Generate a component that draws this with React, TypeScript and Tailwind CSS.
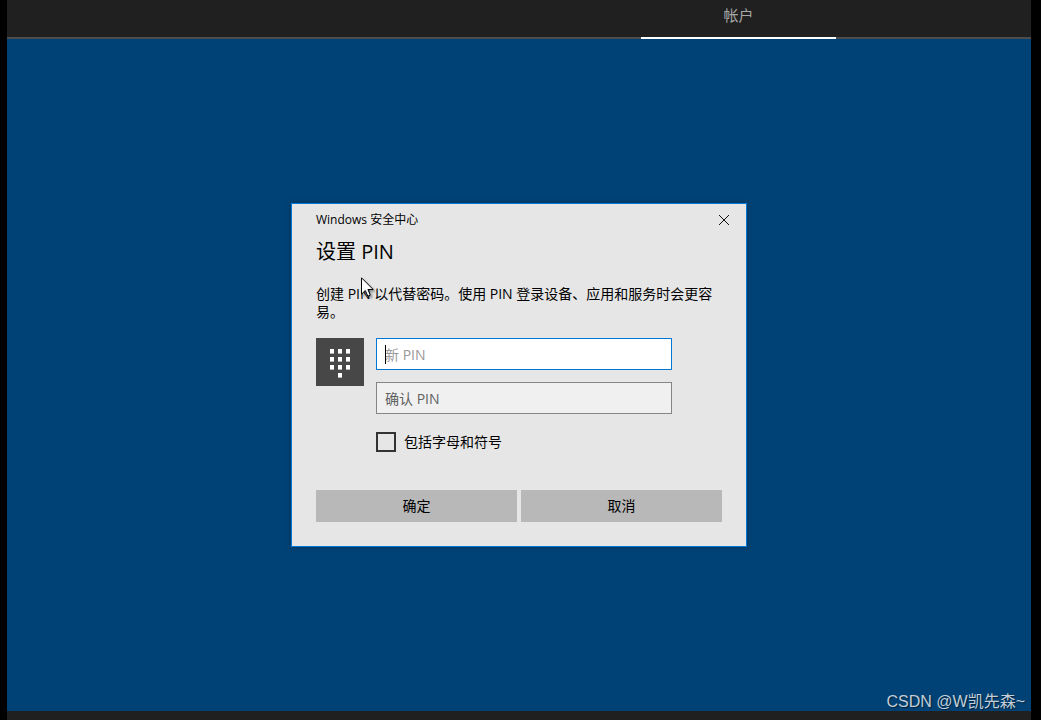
const fieldBase =
  "block h-8 w-full rounded-none border px-2 text-sm text-black outline-none"

// Dial pad: three full rows and a single key below
const keys = [
  [0, 2], [8, 2], [16, 2],
  [0, 10], [8, 10], [16, 10],
  [0, 18], [8, 18], [16, 18],
  [8, 26],
]

function KeypadIcon() {
  return (
    <svg className="block" width="20" height="31" viewBox="0 0 20 31" aria-hidden="true">
      {keys.map(([x, y]) => (
        <rect key={`${x}-${y}`} x={x} y={y} width="4" height="4.6" fill="#fff" />
      ))}
    </svg>
  )
}

function CloseIcon() {
  return (
    <svg className="block" width="10" height="10" viewBox="0 0 10 10" stroke="#111" strokeWidth="1" aria-hidden="true">
      <path d="M0 0 L10 10 M10 0 L0 10" />
    </svg>
  )
}

function Pointer() {
  return (
    <svg
      className="pointer-events-none absolute left-[69px] top-[73px] drop-shadow-[2px_2px_1px_rgba(0,0,0,0.35)]"
      width="14"
      height="22"
      viewBox="0 0 14 22"
      aria-hidden="true"
    >
      <path
        d="M0.5 0.8 V17.2 L4.3 13.5 L6.8 19.2 L9.3 18.1 L6.9 12.5 H12.2 Z"
        fill="#fff"
        stroke="#000"
        strokeWidth="1"
      />
    </svg>
  )
}

function PinDialog() {
  return (
    <form
      role="dialog"
      aria-labelledby="pin-title"
      className="relative w-[456px] border border-[#0078d7] bg-[#e6e6e6] pb-6 text-black shadow-[0_0_6px_rgba(0,0,0,0.2)]"
    >
      {/* Title bar */}
      <div className="flex h-8 items-center justify-between pl-6">
        <span className="text-xs">Windows 安全中心</span>
        <button type="button" aria-label="关闭" className="flex h-8 w-11 items-center justify-center">
          <CloseIcon />
        </button>
      </div>

      <div className="px-6">
        <h1 id="pin-title" className="text-xl leading-8">设置 PIN</h1>
        <p className="mt-[17px] text-sm leading-[18px]">
          创建 PIN 以代替密码。使用 PIN 登录设备、应用和服务时会更容易。
        </p>

        <div className="mt-[17px] flex gap-3">
          <div className="flex size-12 items-center justify-center bg-[#474747]">
            <KeypadIcon />
          </div>
          <div className="w-[296px]">
            <div className="relative">
              <input
                type="text"
                aria-label="新 PIN"
                placeholder="新 PIN"
                className={`${fieldBase} border-[#0078d7] bg-white placeholder:text-[#999999]`}
              />
              <span className="absolute left-[9px] top-[7px] h-[19px] w-px bg-black" />
            </div>
            <input
              type="text"
              aria-label="确认 PIN"
              placeholder="确认 PIN"
              className={`${fieldBase} mt-3 border-[#858585] bg-[#f0f0f0] placeholder:text-[#606060]`}
            />
            <label className="mt-4 flex items-center gap-2 text-sm leading-6">
              <input
                type="checkbox"
                className="size-5 appearance-none rounded-none border-2 border-[#333333] checked:bg-[#0078d7]"
              />
              包括字母和符号
            </label>
          </div>
        </div>

        <div className="mt-9 grid grid-cols-2 gap-1 text-sm">
          <button type="submit" className="h-8 bg-[#b8b8b8]">确定</button>
          <button type="button" className="h-8 bg-[#b8b8b8]">取消</button>
        </div>
      </div>

      <Pointer />
    </form>
  )
}

export default function App() {
  return (
    <div className="relative flex min-h-screen flex-col bg-black pl-[7px] pr-[10px] font-['Open_Sans','Noto_Sans_CJK_SC',sans-serif]">
      {/* Setup tabs */}
      <nav className="flex h-[39px] justify-end border-b-2 border-[#4d4d4d] bg-[#202020] pr-[195px]">
        <a
          href="#account"
          className="-mb-0.5 block w-[195px] border-b-2 border-white pt-[3px] text-center text-[15px] leading-6 text-[#a6a6a6]"
        >
          帐户
        </a>
      </nav>

      <main className="flex grow items-center justify-center bg-[#004275]">
        <PinDialog />
      </main>

      <footer className="h-[9px] bg-[#202020]" />

      {/* Watermark */}
      <span className="absolute bottom-1.5 right-4 font-['Liberation_Sans','Noto_Sans_CJK_SC',sans-serif] text-base leading-6 text-[#c3ced8] [text-shadow:1px_1px_1px_rgba(0,0,0,0.5)]">
        CSDN @W凯先森~
      </span>
    </div>
  )
}
